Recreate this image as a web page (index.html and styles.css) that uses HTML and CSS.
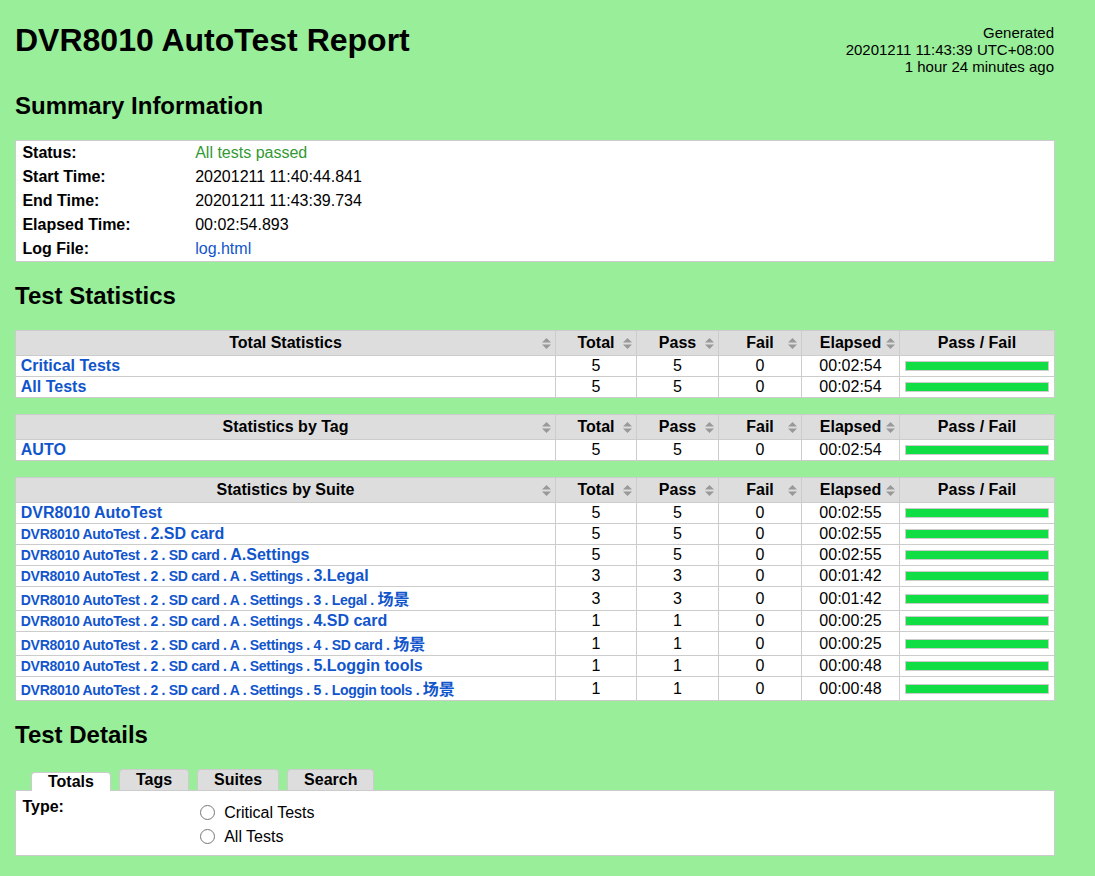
FILE: index.html
```html
<!DOCTYPE html>
<html>
<head>
<meta charset="utf-8">
<title>DVR8010 AutoTest Report</title>
<link rel="stylesheet" href="styles.css">
</head>
<body>
<div class="header">
  <h1>DVR8010 AutoTest Report</h1>
  <div class="generated">Generated<br>20201211 11:43:39 UTC+08:00<br>1 hour 24 minutes ago</div>
</div>

<h2 class="first">Summary Information</h2>
<table class="details">
  <tr><th>Status:</th><td class="pass">All tests passed</td></tr>
  <tr><th>Start Time:</th><td>20201211 11:40:44.841</td></tr>
  <tr><th>End Time:</th><td>20201211 11:43:39.734</td></tr>
  <tr><th>Elapsed Time:</th><td>00:02:54.893</td></tr>
  <tr><th>Log File:</th><td><a href="#">log.html</a></td></tr>
</table>

<h2>Test Statistics</h2>
<table class="statistics">
  <thead>
    <tr>
      <th class="col-name">Total Statistics<svg class="sort" width="9" height="11" viewBox="0 0 9 11"><path d="M4.5 0L9 4.5H0z M0 6.5H9L4.5 11z" fill="#999"/></svg></th>
      <th class="col-stat">Total<svg class="sort" width="9" height="11" viewBox="0 0 9 11"><path d="M4.5 0L9 4.5H0z M0 6.5H9L4.5 11z" fill="#999"/></svg></th>
      <th class="col-stat2">Pass<svg class="sort" width="9" height="11" viewBox="0 0 9 11"><path d="M4.5 0L9 4.5H0z M0 6.5H9L4.5 11z" fill="#999"/></svg></th>
      <th class="col-stat3">Fail<svg class="sort" width="9" height="11" viewBox="0 0 9 11"><path d="M4.5 0L9 4.5H0z M0 6.5H9L4.5 11z" fill="#999"/></svg></th>
      <th class="col-elapsed">Elapsed<svg class="sort" width="9" height="11" viewBox="0 0 9 11"><path d="M4.5 0L9 4.5H0z M0 6.5H9L4.5 11z" fill="#999"/></svg></th>
      <th class="col-graph">Pass / Fail</th>
    </tr>
  </thead>
  <tbody>
    <tr><td class="stat-name"><a href="#">Critical Tests</a></td><td>5</td><td>5</td><td>0</td><td>00:02:54</td><td><div class="graph"></div></td></tr>
    <tr><td class="stat-name"><a href="#">All Tests</a></td><td>5</td><td>5</td><td>0</td><td>00:02:54</td><td><div class="graph"></div></td></tr>
  </tbody>
</table>

<table class="statistics">
  <thead>
    <tr>
      <th class="col-name">Statistics by Tag<svg class="sort" width="9" height="11" viewBox="0 0 9 11"><path d="M4.5 0L9 4.5H0z M0 6.5H9L4.5 11z" fill="#999"/></svg></th>
      <th class="col-stat">Total<svg class="sort" width="9" height="11" viewBox="0 0 9 11"><path d="M4.5 0L9 4.5H0z M0 6.5H9L4.5 11z" fill="#999"/></svg></th>
      <th class="col-stat2">Pass<svg class="sort" width="9" height="11" viewBox="0 0 9 11"><path d="M4.5 0L9 4.5H0z M0 6.5H9L4.5 11z" fill="#999"/></svg></th>
      <th class="col-stat3">Fail<svg class="sort" width="9" height="11" viewBox="0 0 9 11"><path d="M4.5 0L9 4.5H0z M0 6.5H9L4.5 11z" fill="#999"/></svg></th>
      <th class="col-elapsed">Elapsed<svg class="sort" width="9" height="11" viewBox="0 0 9 11"><path d="M4.5 0L9 4.5H0z M0 6.5H9L4.5 11z" fill="#999"/></svg></th>
      <th class="col-graph">Pass / Fail</th>
    </tr>
  </thead>
  <tbody>
    <tr><td class="stat-name"><a href="#">AUTO</a></td><td>5</td><td>5</td><td>0</td><td>00:02:54</td><td><div class="graph"></div></td></tr>
  </tbody>
</table>

<table class="statistics">
  <thead>
    <tr>
      <th class="col-name">Statistics by Suite<svg class="sort" width="9" height="11" viewBox="0 0 9 11"><path d="M4.5 0L9 4.5H0z M0 6.5H9L4.5 11z" fill="#999"/></svg></th>
      <th class="col-stat">Total<svg class="sort" width="9" height="11" viewBox="0 0 9 11"><path d="M4.5 0L9 4.5H0z M0 6.5H9L4.5 11z" fill="#999"/></svg></th>
      <th class="col-stat2">Pass<svg class="sort" width="9" height="11" viewBox="0 0 9 11"><path d="M4.5 0L9 4.5H0z M0 6.5H9L4.5 11z" fill="#999"/></svg></th>
      <th class="col-stat3">Fail<svg class="sort" width="9" height="11" viewBox="0 0 9 11"><path d="M4.5 0L9 4.5H0z M0 6.5H9L4.5 11z" fill="#999"/></svg></th>
      <th class="col-elapsed">Elapsed<svg class="sort" width="9" height="11" viewBox="0 0 9 11"><path d="M4.5 0L9 4.5H0z M0 6.5H9L4.5 11z" fill="#999"/></svg></th>
      <th class="col-graph">Pass / Fail</th>
    </tr>
  </thead>
  <tbody>
    <tr><td class="stat-name"><a href="#">DVR8010 AutoTest</a></td><td>5</td><td>5</td><td>0</td><td>00:02:55</td><td><div class="graph"></div></td></tr>
    <tr><td class="stat-name"><a href="#"><span class="parent-name">DVR8010 AutoTest . </span>2.SD card</a></td><td>5</td><td>5</td><td>0</td><td>00:02:55</td><td><div class="graph"></div></td></tr>
    <tr><td class="stat-name"><a href="#"><span class="parent-name">DVR8010 AutoTest . 2 . SD card . </span>A.Settings</a></td><td>5</td><td>5</td><td>0</td><td>00:02:55</td><td><div class="graph"></div></td></tr>
    <tr><td class="stat-name"><a href="#"><span class="parent-name">DVR8010 AutoTest . 2 . SD card . A . Settings . </span>3.Legal</a></td><td>3</td><td>3</td><td>0</td><td>00:01:42</td><td><div class="graph"></div></td></tr>
    <tr class="tall"><td class="stat-name"><a href="#"><span class="parent-name">DVR8010 AutoTest . 2 . SD card . A . Settings . 3 . Legal . </span><span class="cjk">场景</span></a></td><td>3</td><td>3</td><td>0</td><td>00:01:42</td><td><div class="graph"></div></td></tr>
    <tr><td class="stat-name"><a href="#"><span class="parent-name">DVR8010 AutoTest . 2 . SD card . A . Settings . </span>4.SD card</a></td><td>1</td><td>1</td><td>0</td><td>00:00:25</td><td><div class="graph"></div></td></tr>
    <tr class="tall"><td class="stat-name"><a href="#"><span class="parent-name">DVR8010 AutoTest . 2 . SD card . A . Settings . 4 . SD card . </span><span class="cjk">场景</span></a></td><td>1</td><td>1</td><td>0</td><td>00:00:25</td><td><div class="graph"></div></td></tr>
    <tr><td class="stat-name"><a href="#"><span class="parent-name">DVR8010 AutoTest . 2 . SD card . A . Settings . </span>5.Loggin tools</a></td><td>1</td><td>1</td><td>0</td><td>00:00:48</td><td><div class="graph"></div></td></tr>
    <tr class="tall"><td class="stat-name"><a href="#"><span class="parent-name">DVR8010 AutoTest . 2 . SD card . A . Settings . 5 . Loggin tools . </span><span class="cjk">场景</span></a></td><td>1</td><td>1</td><td>0</td><td>00:00:48</td><td><div class="graph"></div></td></tr>
  </tbody>
</table>

<h2>Test Details</h2>
<div class="tabs">
  <div class="tab selected">Totals</div>
  <div class="tab">Tags</div>
  <div class="tab">Suites</div>
  <div class="tab">Search</div>
</div>
<div class="tab-content">
  <table class="type-table">
    <tr>
      <th>Type:</th>
      <td>
        <div class="opt"><input type="radio" name="type" id="t1"><label for="t1">Critical Tests</label></div>
        <div class="opt"><input type="radio" name="type" id="t2"><label for="t2">All Tests</label></div>
      </td>
    </tr>
  </table>
</div>
</body>
</html>
```

FILE: styles.css
```css
html, body {
  margin: 0;
}
body {
  background: #99ee99;
  color: #000;
  font-family: "Liberation Sans", Arial, Helvetica, sans-serif;
  font-size: 16px;
  padding: 0 15px;
}
a {
  color: #15c;
  text-decoration: none;
}

.header {
  display: flex;
  justify-content: space-between;
  align-items: flex-start;
  width: 1040px;
}
h1 {
  font-size: 32px;
  margin: 22px 0 0;
  line-height: normal;
}
.generated {
  margin-top: 24px;
  padding-right: 1px;
  text-align: right;
  font-size: 15px;
  line-height: 17px;
  white-space: nowrap;
}

h2 {
  font-size: 24px;
  margin: 20px 0;
  line-height: normal;
}
h2.first {
  margin-top: 17px;
}

.details {
  width: 1040px;
  border: 1px solid #ccc;
  border-collapse: collapse;
  background: #fff;
  margin-bottom: 20px;
}
.details th {
  width: 160px;
  text-align: left;
  vertical-align: top;
  padding: 3px 6.4px;
  line-height: 18px;
  white-space: nowrap;
}
.details td {
  vertical-align: top;
  padding: 3px 6.4px;
  line-height: 18px;
}
.pass {
  color: #339933;
}

.statistics {
  width: 1040px;
  table-layout: fixed;
  border-collapse: collapse;
  background: #fff;
  margin-bottom: 16px;
}
.statistics th,
.statistics td {
  border: 1px solid #ccc;
  padding: 1px 4.8px;
  line-height: 18px;
  text-align: center;
  vertical-align: middle;
}
.statistics th {
  background: #ddd;
  padding: 3px 4.8px;
  position: relative;
  font-weight: bold;
}
.col-stat { width: 81px; box-sizing: border-box; }
.col-stat2 { width: 82px; box-sizing: border-box; }
.col-stat3 { width: 83px; box-sizing: border-box; }
.col-elapsed { width: 98px; box-sizing: border-box; }
.col-graph { width: 155px; box-sizing: border-box; }

.sort {
  position: absolute;
  right: 4px;
  top: 50%;
  margin-top: -5.5px;
}

.statistics td.stat-name {
  text-align: left;
  font-weight: bold;
  white-space: nowrap;
}
.parent-name {
  font-size: 14px;
  letter-spacing: -0.3px;
}
.cjk {
  font-family: "Noto Sans CJK SC", "Liberation Sans", sans-serif;
  font-weight: bold;
  line-height: 21px;
}
.statistics tr.tall td {
  height: 21px;
}

.graph {
  border: 1px solid #ccc;
  height: 8px;
  background: #11dd44;
}

.tabs {
  display: flex;
  align-items: flex-end;
  height: 21px;
  margin-left: 16px;
}
.tab {
  height: 21px;
  box-sizing: border-box;
  background: #ddd;
  border: 1px solid #ccc;
  border-bottom: 0;
  border-radius: 4px 4px 0 0;
  padding: 0 16px;
  margin-right: 8px;
  font-weight: bold;
  line-height: 20px;
}
.tab.selected {
  background: #fff;
  height: 19px;
  line-height: 18px;
  position: relative;
  top: 1px;
  z-index: 1;
}

.tab-content {
  width: 1040px;
  height: 66px;
  box-sizing: border-box;
  background: #fff;
  border: 1px solid #ccc;
  padding-top: 4px;
}
.type-table {
  border-collapse: collapse;
}
.type-table th {
  width: 160px;
  text-align: left;
  vertical-align: top;
  padding: 3px 6.4px;
  line-height: 18px;
}
.type-table td {
  vertical-align: top;
  padding: 6px 6.4px 0;
  line-height: 24px;
}
.opt input {
  width: 15px;
  height: 15px;
  margin: 3px 9px 0 5px;
  vertical-align: -2px;
}
```
